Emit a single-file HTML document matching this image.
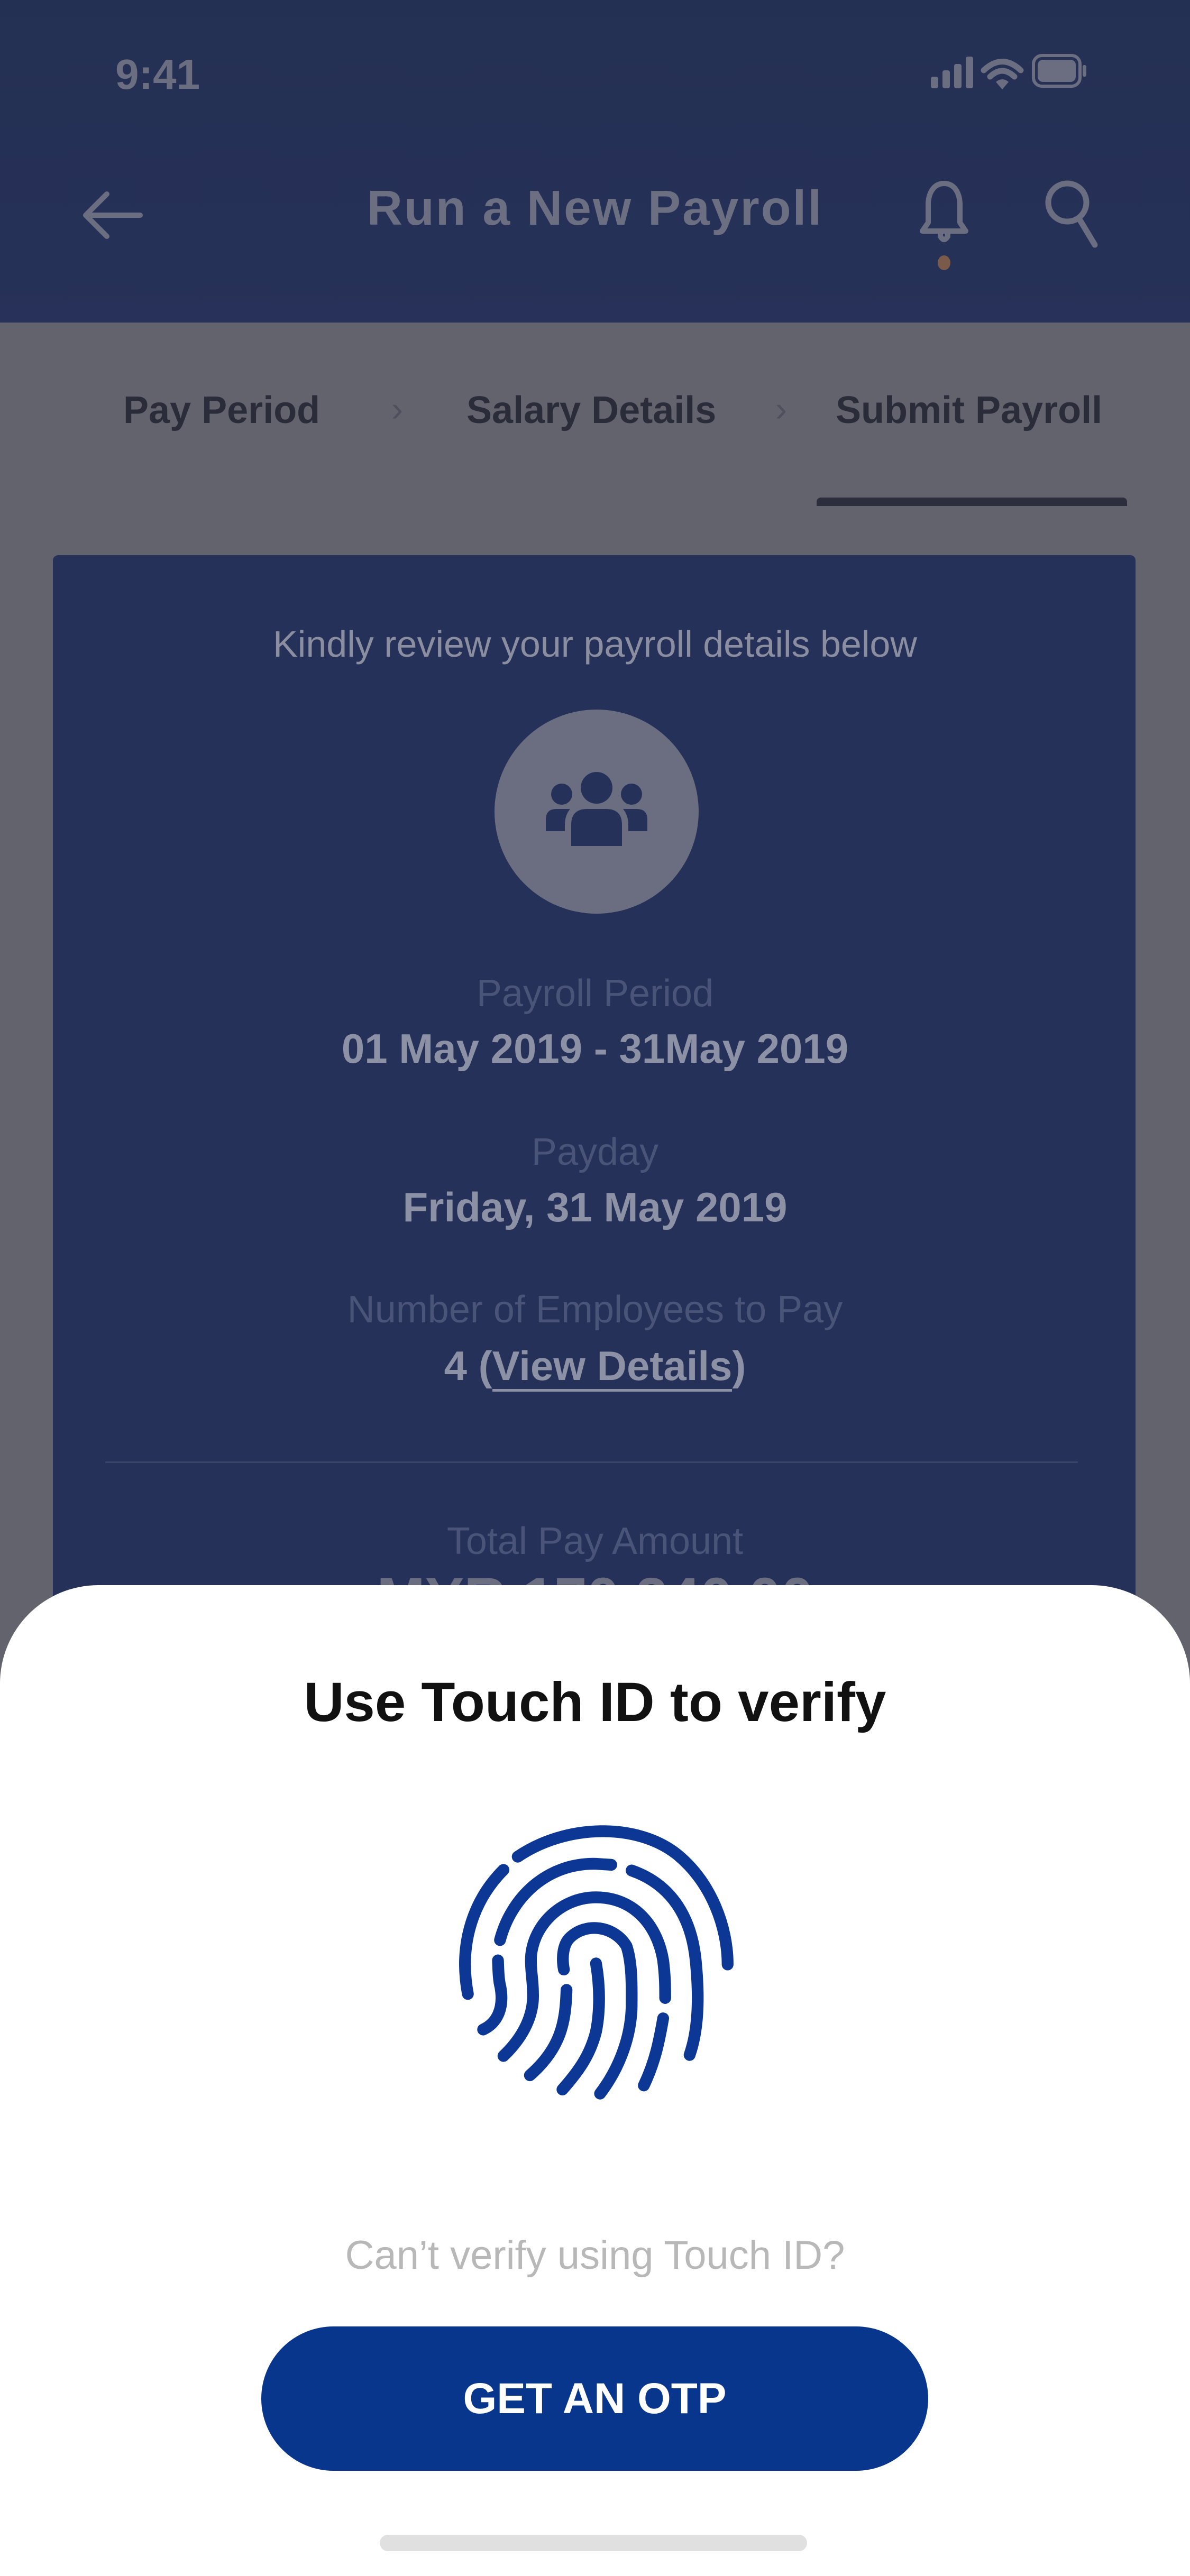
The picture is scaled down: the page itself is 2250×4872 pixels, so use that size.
<!DOCTYPE html>
<html><head><meta charset="utf-8"><style>
*{margin:0;padding:0;box-sizing:border-box}
body{width:2250px;height:4872px;position:relative;overflow:hidden;background:#63636e;font-family:"Liberation Sans",sans-serif}
.a{position:absolute}
.c{position:absolute;left:0;width:2250px;text-align:center}
</style></head><body>
<div class="a" style="left:0;top:0;width:2250px;height:610px;background:linear-gradient(#243053,#273159)"></div>
<div class="a" style="left:218px;top:95px;font-size:80px;font-weight:bold;color:#6b6e80">9:41</div>
<svg class="a" style="left:1750px;top:95px" width="410" height="90" viewBox="0 0 410 90">
<g fill="#6b6e80"><rect x="10" y="50" width="14" height="22" rx="4"/><rect x="32" y="38" width="14" height="34" rx="4"/><rect x="54" y="26" width="14" height="46" rx="4"/><rect x="76" y="12" width="14" height="60" rx="4"/></g>
<path d="M110 38 Q145 5 180 38 M122 50 Q145 28 168 50" stroke="#6b6e80" stroke-width="11" fill="none" stroke-linecap="round"/>
<path d="M133 60 L145 74 L157 60 Q145 50 133 60Z" fill="#6b6e80"/>
<rect x="204" y="10" width="88" height="58" rx="16" stroke="#6b6e80" stroke-width="6" fill="none"/>
<rect x="212" y="18" width="72" height="42" rx="10" fill="#6b6e80"/>
<rect x="297" y="28" width="7" height="22" rx="3" fill="#6b6e80"/></svg>
<svg class="a" style="left:150px;top:355px" width="130" height="100" viewBox="0 0 130 100"><path d="M115 52 H18 M52 12 L12 52 L52 92" stroke="#6b6e80" stroke-width="10" fill="none" stroke-linecap="round" stroke-linejoin="round"/></svg>
<div class="c" style="top:340px;font-size:93px;font-weight:bold;color:#6c6f82;letter-spacing:3px">Run a New Payroll</div>
<svg class="a" style="left:1730px;top:335px" width="120" height="180" viewBox="0 0 120 180">
<path d="M55 12 C33 12 25 34 25 52 V86 L14 102 H96 L85 86 V52 C85 34 77 12 55 12Z" stroke="#6b6e80" stroke-width="10" fill="none" stroke-linejoin="round"/>
<path d="M48 104 V112 Q55 124 62 112 V104" stroke="#6b6e80" stroke-width="10" fill="none"/>
<ellipse cx="55" cy="162" rx="12" ry="14" fill="#7a5a4a"/></svg>
<svg class="a" style="left:1970px;top:335px" width="110" height="140" viewBox="0 0 110 140"><circle cx="48" cy="48" r="36" stroke="#6b6e80" stroke-width="11" fill="none"/><path d="M70 78 L100 128" stroke="#6b6e80" stroke-width="11" stroke-linecap="round"/></svg>
<div class="a" style="left:233px;top:735px;font-size:72px;font-weight:bold;color:#2a2c3a">Pay Period</div>
<div class="a" style="left:740px;top:735px;font-size:66px;color:#4e505c">›</div>
<div class="a" style="left:882px;top:735px;font-size:72px;font-weight:bold;color:#2a2c3a">Salary Details</div>
<div class="a" style="left:1466px;top:735px;font-size:66px;color:#4e505c">›</div>
<div class="a" style="left:1580px;top:735px;font-size:72px;font-weight:bold;color:#2a2c3a">Submit Payroll</div>
<div class="a" style="left:1544px;top:941px;width:587px;height:16px;border-radius:8px 8px 0 0;background:#2c2d3d"></div>
<div class="a" style="left:100px;top:1050px;width:2047px;height:2100px;background:#253158;border-radius:10px"></div>
<div class="c" style="top:1178px;font-size:70px;color:#8a8ea0">Kindly review your payroll details below</div>
<div class="a" style="left:935px;top:1342px;width:386px;height:386px;border-radius:50%;background:#6b6e80"></div>
<svg class="a" style="left:1028px;top:1450px" width="200" height="160" viewBox="0 0 200 160">
<g fill="#253158"><circle cx="100" cy="40" r="30"/><path d="M52 150 V110 Q52 80 82 80 H118 Q148 80 148 110 V150Z"/>
<circle cx="34" cy="52" r="20"/><circle cx="166" cy="52" r="20"/><path d="M4 122 V100 Q4 80 24 80 H50 Q40 92 40 110 V122Z"/><path d="M196 122 V100 Q196 80 176 80 H150 Q160 92 160 110 V122Z"/></g></svg>
<div class="c" style="top:1838px;font-size:72px;color:#4a5478">Payroll Period</div>
<div class="c" style="top:1938px;font-size:78px;font-weight:bold;color:#8d91a5">01 May 2019 - 31May 2019</div>
<div class="c" style="top:2138px;font-size:72px;color:#4a5478">Payday</div>
<div class="c" style="top:2238px;font-size:78px;font-weight:bold;color:#8d91a5">Friday, 31 May 2019</div>
<div class="c" style="top:2436px;font-size:72px;color:#4a5478">Number of Employees to Pay</div>
<div class="c" style="top:2538px;font-size:78px;font-weight:bold;color:#8d91a5">4 (<span style="border-bottom:5px solid #8d91a5">View Details</span>)</div>
<div class="a" style="left:199px;top:2764px;width:1839px;height:3px;background:#3a4468"></div>
<div class="c" style="top:2874px;font-size:72px;color:#4a5478">Total Pay Amount</div>
<div class="c" style="top:2960px;font-size:110px;font-weight:bold;color:#6b6e80">MYR 170,240.00</div>
<div class="a" style="left:0;top:2998px;width:2250px;height:1874px;background:#fff;border-radius:186px 186px 0 0"></div>
<div class="c" style="top:3160px;font-size:105px;font-weight:bold;color:#111">Use Touch ID to verify</div>
<svg class="a" style="left:800px;top:3400px" width="600" height="600" viewBox="0 0 1560 1560">
<g stroke="#0c3794" stroke-width="58" fill="none" stroke-linecap="round">
<path d="M465 290 C700 130 1050 120 1250 280 C1420 420 1497 640 1497 820"/>
<path d="M395 355 C260 490 170 700 220 965"/>
<path d="M378 700 C430 500 600 320 850 325 L925 330"/>
<path d="M1025 358 C1230 430 1320 600 1340 800 C1360 1000 1350 1150 1310 1265"/>
<path d="M368 800 C370 860 372 900 380 930 C400 1040 360 1110 295 1140"/>
<path d="M395 1270 C500 1170 545 1060 540 960 C540 900 530 860 530 800 C530 640 670 490 850 490 C1030 490 1150 620 1180 800 C1190 880 1190 930 1190 985"/>
<path d="M692 845 C680 780 690 720 720 690 C800 610 940 630 1000 730 C1030 820 1025 950 1025 1030 C1020 1200 950 1350 870 1455"/>
<path d="M705 945 C700 1100 680 1230 525 1365"/>
<path d="M850 815 C870 930 870 1050 850 1150 C820 1270 760 1350 685 1435"/>
<path d="M1180 1085 C1160 1200 1140 1300 1085 1415"/>
</g></svg>
<div class="c" style="top:4222px;font-size:76px;color:#b8b8b8">Can’t verify using Touch ID?</div>
<div class="a" style="left:494px;top:4400px;width:1261px;height:273px;border-radius:137px;background:#08368c;color:#fff;font-size:82px;font-weight:bold;text-align:center;line-height:273px">GET AN OTP</div>
<div class="a" style="left:718px;top:4794px;width:808px;height:31px;border-radius:16px;background:#e0e0e0"></div>
</body></html>
